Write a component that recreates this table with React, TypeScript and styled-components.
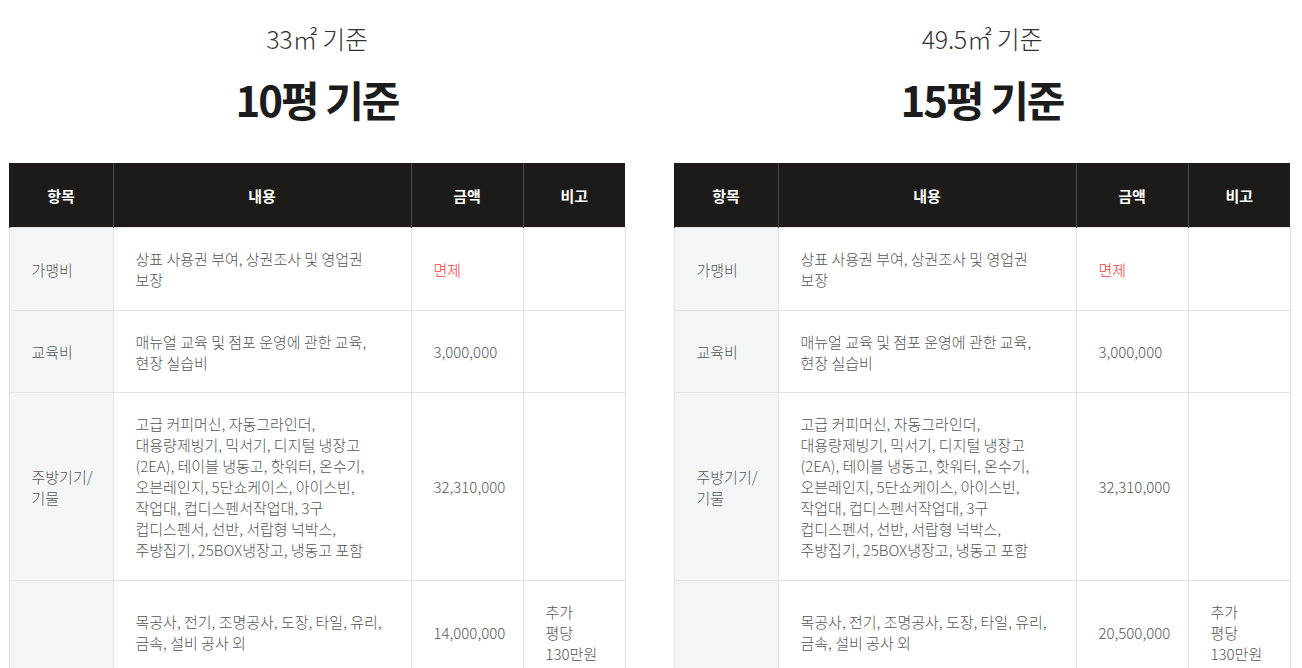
import React from "react";
import styled, { createGlobalStyle } from "styled-components";

const GlobalStyle = createGlobalStyle`
  html, body {
    margin: 0;
    padding: 0;
    background: #fff;
  }
  body {
    font-family: "Noto Sans CJK KR", "Noto Sans", sans-serif;
    color: #555;
  }
`;

const Page = styled.div`
  display: grid;
  grid-template-columns: 616px 616px;
  column-gap: 49px;
  padding: 21px 0 0 9px;
`;

const Plan = styled.section`
  display: flex;
  flex-direction: column;
  align-items: center;
`;

const Area = styled.p`
  margin: 0;
  font-size: 25px;
  font-weight: 300;
  line-height: 34px;
  color: #333;
  letter-spacing: -0.3px;
`;

const Title = styled.h2`
  margin: 18px 0 0;
  font-size: 42px;
  font-weight: 700;
  line-height: 52px;
  color: #1c1c1c;
  letter-spacing: -2px;
`;

const Table = styled.table`
  width: 100%;
  margin-top: 38px;
  border-collapse: collapse;
  table-layout: fixed;
  font-size: 15px;
  line-height: 21px;
`;

const Th = styled.th`
  height: 64px;
  padding: 0;
  background: #1c1b19;
  color: #fff;
  font-size: 15px;
  font-weight: 700;
  text-align: center;
  border-left: 1px solid #4a4a4a;

  &:first-child {
    border-left: 1px solid #1c1b19;
  }
`;

const Td = styled.td<{ $head?: boolean; $red?: boolean }>`
  padding: 20px ${(p) => (p.$head ? "8px" : "22px")} 19.5px 22px;
  border: 1px solid #e2e2e2;
  vertical-align: middle;
  text-align: left;
  font-weight: 300;
  white-space: ${(p) => (p.$head ? "nowrap" : "normal")};
  color: ${(p) => (p.$red ? "#ff3333" : "#555")};
  background: ${(p) => (p.$head ? "#f4f5f7" : "#fff")};
`;

type Row = {
  item: React.ReactNode;
  content: React.ReactNode;
  price: string;
  red?: boolean;
  note?: React.ReactNode;
};

const rows = (fitout: string): Row[] => [
  {
    item: "가맹비",
    content: (
      <>
        상표 사용권 부여, 상권조사 및 영업권
        <br />
        보장
      </>
    ),
    price: "면제",
    red: true,
  },
  {
    item: "교육비",
    content: (
      <>
        매뉴얼 교육 및 점포 운영에 관한 교육,
        <br />
        현장 실습비
      </>
    ),
    price: "3,000,000",
  },
  {
    item: (
      <>
        주방기기/
        <br />
        기물
      </>
    ),
    content: (
      <>
        고급 커피머신, 자동그라인더,
        <br />
        대용량제빙기, 믹서기, 디지털 냉장고
        <br />
        (2EA), 테이블 냉동고, 핫워터, 온수기,
        <br />
        오븐레인지, 5단쇼케이스, 아이스빈,
        <br />
        작업대, 컵디스펜서작업대, 3구
        <br />
        컵디스펜서, 선반, 서랍형 넉박스,
        <br />
        주방집기, 25BOX냉장고, 냉동고 포함
      </>
    ),
    price: "32,310,000",
  },
  {
    item: "",
    content: (
      <>
        목공사, 전기, 조명공사, 도장, 타일, 유리,
        <br />
        금속, 설비 공사 외
      </>
    ),
    price: fitout,
    note: (
      <>
        추가
        <br />
        평당
        <br />
        130만원
      </>
    ),
  },
];

const plans = [
  { area: "33㎡ 기준", title: "10평 기준", fitout: "14,000,000" },
  { area: "49.5㎡ 기준", title: "15평 기준", fitout: "20,500,000" },
];

function CostTable({ fitout }: { fitout: string }) {
  return (
    <Table>
      <colgroup>
        <col style={{ width: 104 }} />
        <col style={{ width: 298 }} />
        <col style={{ width: 112 }} />
        <col style={{ width: 102 }} />
      </colgroup>
      <thead>
        <tr>
          <Th>항목</Th>
          <Th>내용</Th>
          <Th>금액</Th>
          <Th>비고</Th>
        </tr>
      </thead>
      <tbody>
        {rows(fitout).map((r, i) => (
          <tr key={i}>
            <Td $head>{r.item}</Td>
            <Td>{r.content}</Td>
            <Td $red={r.red}>{r.price}</Td>
            <Td>{r.note}</Td>
          </tr>
        ))}
      </tbody>
    </Table>
  );
}

export default function App() {
  return (
    <>
      <GlobalStyle />
      <Page>
        {plans.map((p) => (
          <Plan key={p.title}>
            <Area>{p.area}</Area>
            <Title>{p.title}</Title>
            <CostTable fitout={p.fitout} />
          </Plan>
        ))}
      </Page>
    </>
  );
}
